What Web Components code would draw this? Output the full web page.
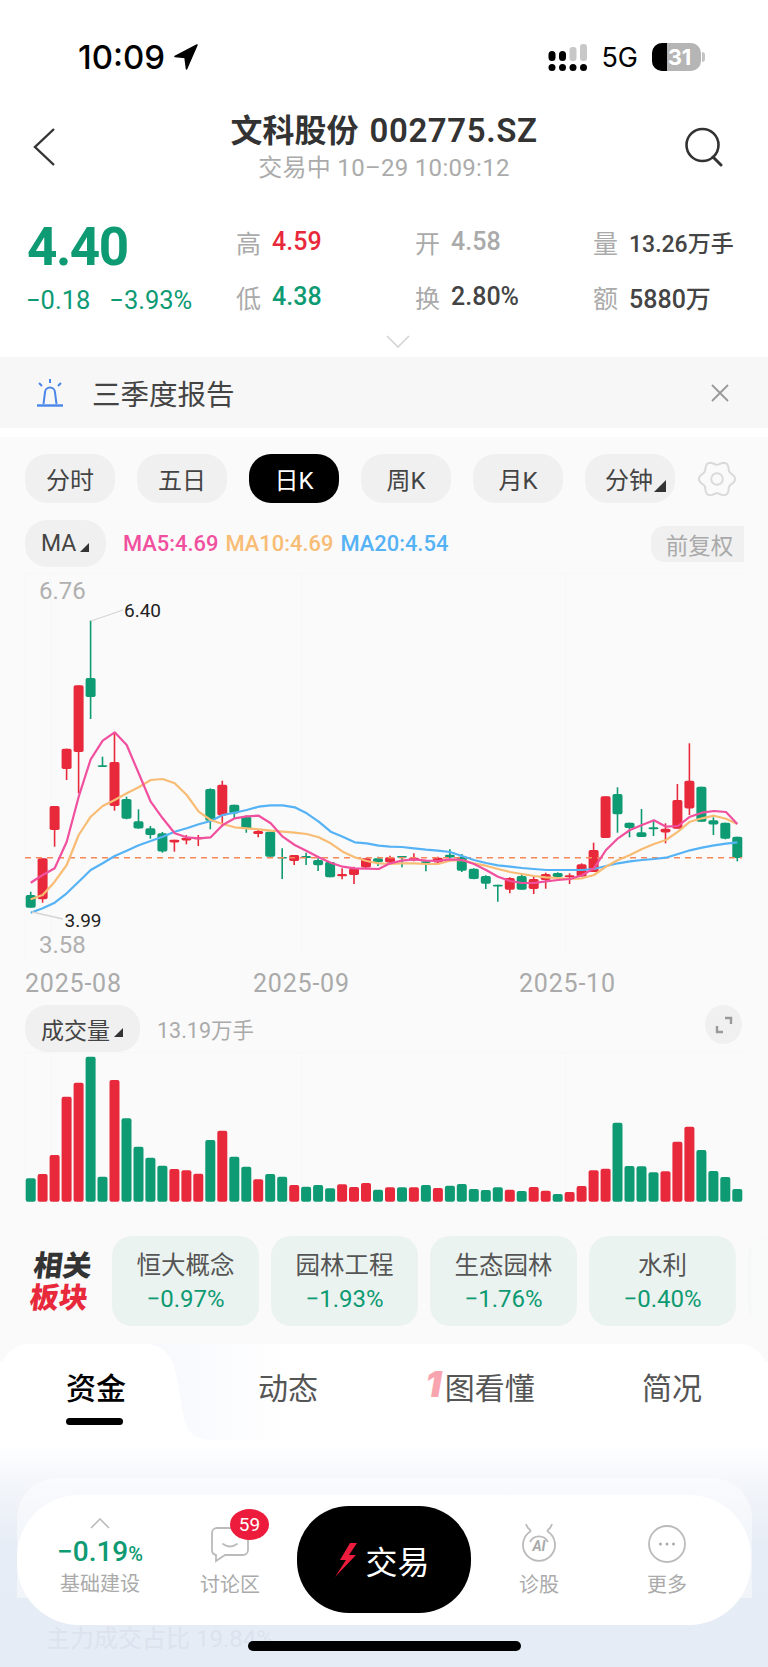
<!DOCTYPE html>
<html lang="zh-CN">
<head>
<meta charset="utf-8">
<title>文科股份</title>
<style>
  html, body { margin: 0; padding: 0; background: #fff; }
  body { width: 768px; height: 1667px; overflow: hidden; font-family: "Roboto", "Noto Sans CJK SC", sans-serif; }
</style>
</head>
<body>
<stock-page></stock-page>

<script>
const GREEN = '#0e9a72';
const RED = '#e8293b';

// [bodyTop, bodyBottom, wickTop, wickBottom, colour], measured from the crops
const LEFT_CANDLES = [
  [945,983,935,983,'g'],[835,958,835,968,'r'],[678,750,678,800,'r'],[506,567,506,600,'r'],[316,516,316,640,'r'],
  [294,351,122,417,'g'],[556,560,530,560,'g'],[546,678,458,692,'r'],[657,716,650,718,'g'],[724,746,688,746,'g'],
  [745,765,738,776,'g'],[760,815,756,818,'g'],[779,787,779,815,'r'],[773,781,765,793,'r'],[771,778,765,798,'r'],
  [627,722,625,748,'g'],[614,706,602,740,'r'],[674,700,674,716,'g'],[710,747,706,758,'g'],[753,762,750,772,'r'],
  [755,830,755,830,'g'],[831,835,805,897,'g'],[825,843,825,855,'r'],[828,834,818,855,'g'],[840,856,835,873,'g'],
  [846,892,846,892,'g'],[882,889,865,898,'r'],[865,885,860,912,'r'],[835,863,835,865,'r'],[835,847,830,858,'g']
].map(c => [580 + c[0] / 3, 580 + c[1] / 3, 580 + c[2] / 3, 580 + c[3] / 3, c[4]]);

const RIGHT_CANDLES = [
  [472,488,467,490,'r'],[468,473,468,502,'g'],[473,481,460,484,'r'],[484,488,484,514,'g'],[473,487,470,492,'r'],
  [464,472,448,475,'g'],[470,512,462,516,'g'],[506,537,505,538,'g'],[528,551,526,567,'g'],[554,559,554,605,'g'],
  [534,569,532,580,'r'],[528,569,520,569,'g'],[537,567,530,582,'r'],[522,540,518,566,'r'],[519,531,517,535,'g'],
  [526,532,520,552,'r'],[493,530,490,530,'r'],[450,516,428,516,'r'],[289,414,289,414,'r'],[282,343,262,398,'g'],
  [368,384,368,412,'g'],[397,411,327,411,'g'],[382,388,362,408,'g'],[386,397,370,430,'r'],[300,386,252,386,'r'],
  [242,325,130,345,'r'],[260,365,260,365,'g'],[361,374,352,405,'g'],[368,416,368,418,'g'],[410,474,410,484,'g']
].map(c => [700 + c[0] / 3, 700 + c[1] / 3, 700 + c[2] / 3, 700 + c[3] / 3, c[4]]);

const CANDLES = LEFT_CANDLES.concat(RIGHT_CANDLES);

const MA5 = [[92,908],[128,885],[164,865],[200,785],[236,650],[272,538],[308,482],[344,457],[380,495],[416,580],[452,665],[488,715],[524,760],[560,772],[596,775],[632,772],[668,735],[704,715],[740,709],[776,707],[812,730],[848,770],[884,795],[920,813],[956,832],[992,848],[1028,860],[1064,865],[1100,866],[1136,867]];
const MA5R = [[18,490],[54,482],[90,478],[126,482],[162,483],[198,478],[234,480],[270,492],[306,510],[342,530],[378,543],[414,549],[450,549],[486,544],[522,540],[558,537],[594,526],[630,505],[666,450],[702,415],[738,390],[774,375],[810,361],[846,380],[882,378],[918,350],[954,338],[990,333],[1026,336],[1060,372]];
const MA10 = [[92,958],[128,945],[164,905],[200,855],[236,765],[272,710],[308,678],[344,660],[380,640],[416,622],[452,600],[488,597],[524,610],[560,645],[596,695],[632,720],[668,732],[704,742],[740,745],[776,748],[812,752],[848,755],[884,758],[920,762],[956,772],[992,790],[1028,815],[1064,832],[1100,843],[1136,850]];
const MA10R = [[18,492],[54,490],[90,490],[126,492],[162,492],[198,482],[234,480],[270,490],[306,497],[342,507],[378,516],[414,522],[450,528],[486,532],[522,534],[558,537],[594,535],[630,525],[666,500],[702,480],[738,465],[774,447],[810,432],[846,420],[882,395],[918,365],[954,355],[990,347],[1026,356],[1060,372]];
const MA20 = [[92,998],[128,985],[164,968],[200,940],[236,905],[272,870],[308,850],[344,828],[380,812],[416,796],[452,783],[488,770],[524,755],[560,745],[596,733],[632,723],[668,705],[704,698],[740,690],[776,680],[812,676],[848,676],[884,682],[920,700],[956,725],[992,755],[1028,770],[1064,787],[1100,790],[1136,797]];
const MA20R = [[18,440],[54,441],[90,445],[126,449],[162,452],[198,456],[234,468],[270,480],[306,489],[342,496],[378,500],[414,504],[450,507],[486,510],[522,510],[558,510],[594,510],[630,507],[666,498],[702,490],[738,484],[774,480],[810,477],[846,473],[882,462],[918,451],[954,443],[990,436],[1026,431],[1060,427]];

const VOL_LEFT = [535,522,465,290,248,170,530,240,355,440,473,497,507,511,521,420,392,470,500,538,522,530,555,560,555,565,553,561,549,569];
const VOL_LEFT_C = 'grrrrggrggggrrrgrggrggrgggrrrg';
const VOL_RIGHT = [562,562,562,555,564,557,552,567,570,562,569,573,561,572,582,576,558,511,506,368,498,499,517,514,425,380,450,513,531,567];
const VOL_RIGHT_C = 'rgrgrggggg'+'rgrrgrrrrg'+'gggrrrgggg';

const candleX = i => 30.67 + 11.977 * i;

function maPoints(left, right) {
  const a = left.map(p => [p[0] / 3, 580 + p[1] / 3]);
  const b = right.map(p => [384 + p[0] / 3, 700 + p[1] / 3]);
  return a.concat(b).map(p => p[0].toFixed(1) + ',' + p[1].toFixed(1)).join(' ');
}

// soft six lobed cog outline
function gearPath() {
  let d = '';
  for (let a = 0; a < 360; a += 4) {
    const t = a * Math.PI / 180;
    const r = 16.2 + 1.9 * Math.cos(6 * t);
    d += (a ? 'L' : 'M') + (19 + r * Math.cos(t)).toFixed(2) + ' ' + (19 + r * Math.sin(t)).toFixed(2);
  }
  return d + 'Z';
}

class StatusBar extends HTMLElement {
  constructor() {
    super();
    this.attachShadow({ mode: 'open' });
    this.shadowRoot.innerHTML = `
      <style>
        :host { display: flex; align-items: center; height: 107px; padding: 7px 63px 0 78px; box-sizing: border-box; color: #000; }
        .time { font: 500 33px "Inter", "Liberation Sans", sans-serif; }
        .arrow { margin-left: 9px; }
        .gap { flex: 1; }
        .net { font: 400 27px "Inter", "Liberation Sans", sans-serif; margin: 0 14px 0 13px; }
        .batt { position: relative; width: 49px; height: 28px; border-radius: 10px; overflow: hidden; background: #b5b5b5; color: #fff; font: 700 22px/28px "Inter", "Liberation Sans", sans-serif; text-align: center; }
        .batt i { position: absolute; left: 0; top: 0; bottom: 0; width: 15px; background: #000; }
        .batt span { position: relative; left: 3px; }
        .tip { width: 3px; height: 10px; margin-left: 1px; background: #c4c4c4; border-radius: 0 3px 3px 0; }
      </style>
      <span class="time">10:09</span>
      <svg class="arrow" width="24" height="26" viewBox="0 0 24 26"><path d="M23 1 1 12.5 11 13.5 12.5 25z" fill="#000" stroke="#000" stroke-width="1.5" stroke-linejoin="round"/></svg>
      <span class="gap"></span>
      <svg width="40" height="27" viewBox="0 0 40 27">
        <g fill="#000">
          <rect x="0.5" y="7" width="7" height="10" rx="3.5"/><rect x="11" y="7" width="7" height="10" rx="3.5"/>
          <circle cx="4" cy="23.500" r="3.500"/><circle cx="14.500" cy="23.500" r="3.500"/>
          <circle cx="25" cy="23.500" r="3.500"/><circle cx="35.500" cy="23.500" r="3.500"/>
        </g>
        <rect x="21.500" y="3" width="7" height="14" rx="3" fill="#c8c8c8"/>
        <rect x="32" y="0" width="7" height="17" rx="3" fill="#c8c8c8"/>
      </svg>
      <span class="net">5G</span>
      <span class="batt"><i></i><span>31</span></span><span class="tip"></span>
    `;
  }
}

class TopBar extends HTMLElement {
  constructor() {
    super();
    this.attachShadow({ mode: 'open' });
    this.shadowRoot.innerHTML = `
      <style>
        :host { display: grid; grid-template-columns: 1fr auto 1fr; align-items: center; height: 80px; padding: 0 44px 0 44px; box-sizing: border-box; }
        .mid { display: flex; flex-direction: column; align-items: center; }
        .name { font: 600 32px/40px "Roboto", "Noto Sans CJK SC", sans-serif; color: #333; white-space: nowrap; word-spacing: 3px; }
        .name span { font-size: 33px; letter-spacing: .6px; }
        .sub { font: 400 24px/30px "Roboto", "Noto Sans CJK SC", sans-serif; color: #ababab; margin-top: 2px; letter-spacing: .3px; white-space: nowrap; }
        .b { margin-left: -12px; }
        .s { justify-self: end; }
      </style>
      <svg class="b" width="24" height="38" viewBox="0 0 24 38"><path d="M22 1 3 19 22 37" fill="none" stroke="#333" stroke-width="2.4"/></svg>
      <div class="mid"><div class="name">文科股份 <span>002775.SZ</span></div><div class="sub">交易中 10–29 10:09:12</div></div>
      <svg class="s" width="40" height="40" viewBox="0 0 40 40"><circle cx="18.5" cy="18" r="16" fill="none" stroke="#333" stroke-width="2.6"/><path d="M29 30 37 38" stroke="#333" stroke-width="3" stroke-linecap="round"/></svg>
    `;
  }
}

class QuoteStat extends HTMLElement {
  constructor() {
    super();
    this.attachShadow({ mode: 'open' });
    this.shadowRoot.innerHTML = `
      <style>
        :host { display: flex; align-items: center; gap: 11px; height: 55px; white-space: nowrap; }
        .k { font-size: 25px; color: #aaa; }
        .v { font-size: 25px; font-weight: 500; color: var(--val, #444); }
        :host([small]) .v { font-size: 23px; }
      </style>
      <span class="k">${this.getAttribute('label')}</span>
      <span class="v"><slot></slot></span>
    `;
  }
}

class QuotePanel extends HTMLElement {
  constructor() {
    super();
    this.attachShadow({ mode: 'open' });
    this.shadowRoot.innerHTML = `
      <style>
        :host { display: block; height: 170px; box-sizing: border-box; padding: 27px 0 0 27px; position: relative; }
        .wrap { display: grid; grid-template-columns: 209px 179px 178px auto; }
        .price { font: 700 53px/52px "Roboto", sans-serif; color: ${GREEN}; height: 55px; box-sizing: border-box; padding-top: 7px; letter-spacing: -1.5px; }
        .chg { font-size: 25.500px; color: ${GREEN}; display: flex; gap: 19px; height: 55px; box-sizing: border-box; padding-top: 7px; align-items: center; margin-left: -1px; white-space: nowrap; }
        .down { position: absolute; left: 386px; top: 148px; }
        quote-stat.red { --val: ${RED}; }
        quote-stat.green { --val: ${GREEN}; }
        quote-stat.mute { --val: #aaa; }
      </style>
      <div class="wrap">
        <div class="price">4.40</div>
        <quote-stat label="高" class="red">4.59</quote-stat>
        <quote-stat label="开" class="mute">4.58</quote-stat>
        <quote-stat label="量" small>13.26万手</quote-stat>
        <div class="chg"><span>−0.18</span><span>−3.93%</span></div>
        <quote-stat label="低" class="green">4.38</quote-stat>
        <quote-stat label="换">2.80%</quote-stat>
        <quote-stat label="额">5880万</quote-stat>
      </div>
      <svg class="down" width="24" height="13" viewBox="0 0 24 13"><path d="M1 1 12 12 23 1" fill="none" stroke="#d4d4d4" stroke-width="1.6"/></svg>
    `;
  }
}

class NoticeBar extends HTMLElement {
  constructor() {
    super();
    this.attachShadow({ mode: 'open' });
    this.shadowRoot.innerHTML = `
      <style>
        :host { display: flex; align-items: center; height: 71px; background: #f7f7f7; padding: 0 39px 0 36px; font-size: 28.500px; color: #444; }
        .txt { flex: 1; margin-left: 28px; }
      </style>
      <svg width="28" height="28" viewBox="0 0 28 28" fill="none" stroke="#4a86e8" stroke-width="2">
        <path d="M7.500 25 9 13.500a5 5 0 0 1 10 0L20.500 25"/><path d="M1 26.500h26" stroke-width="2.400"/><path d="M14 0v4M3 4l3 3M25 4l-3 3"/>
      </svg>
      <span class="txt"><slot></slot></span>
      <svg width="18" height="18" viewBox="0 0 18 18"><path d="M1 1 17 17M17 1 1 17" stroke="#999" stroke-width="1.800"/></svg>
    `;
  }
}

class ChipButton extends HTMLElement {
  constructor() {
    super();
    this.attachShadow({ mode: 'open' });
    this.shadowRoot.innerHTML = `
      <style>
        :host { display: flex; align-items: center; justify-content: center; width: 90px; height: 49px; box-sizing: border-box; border-radius: 22px; background: #f0f0f0; color: #444; font-size: 24px; white-space: nowrap; }
        :host([active]) { background: #000; color: #fff; }
        :host([caret]) { justify-content: flex-start; padding-left: var(--chip-pad, 16px); }
        .corner { display: none; align-self: flex-end; margin: 0 0 var(--caret-bottom, 15px) var(--caret-gap, 4px); width: 0; height: 0; border-left: var(--caret-size, 10px) solid transparent; border-bottom: var(--caret-size, 10px) solid #333; }
        :host([caret]) .corner { display: block; }
      </style>
      <slot></slot><i class="corner"></i>
    `;
  }
}

class PeriodRow extends HTMLElement {
  constructor() {
    super();
    this.attachShadow({ mode: 'open' });
    this.shadowRoot.innerHTML = `
      <style>
        :host { display: flex; align-items: center; gap: 22px; height: 49px; padding-left: 25px; --chip-pad: 20px; --caret-bottom: 11px; --caret-gap: 1px; --caret-size: 12px; }
        svg { margin-left: 1px; }
      </style>
      <slot></slot>
      <svg width="38" height="38" viewBox="0 0 38 38" fill="none" stroke="#dadada" stroke-width="2">
        <path d="${gearPath()}" stroke-linejoin="round"/>
        <circle cx="19" cy="19" r="5.800"/>
      </svg>
    `;
  }
}

class MaLegend extends HTMLElement {
  constructor() {
    super();
    this.attachShadow({ mode: 'open' });
    this.shadowRoot.innerHTML = `
      <style>
        :host { display: flex; align-items: center; height: 47px; margin-top: 17px; padding-left: 25px; font-size: 21.900px; white-space: nowrap; }
        chip-button { width: 81px; height: 47px; font-size: 23px; --caret-size: 9px; }
        .vals { display: flex; gap: 7px; margin-left: 17px; flex: 1; font-weight: 500; }
        .fq { display: flex; align-items: center; justify-content: center; width: 93px; height: 36px; box-sizing: border-box; padding-left: 4px; margin-right: 24px; background: #f0f0f0; border-radius: 14px 0 0 14px; color: #aaa; font-size: 22.500px; }
      </style>
      <chip-button caret>MA</chip-button>
      <div class="vals">
        <span style="color:#f0509e">MA5:4.69</span>
        <span style="color:#f8bc75">MA10:4.69</span>
        <span style="color:#55b2f5">MA20:4.54</span>
      </div>
      <div class="fq">前复权</div>
    `;
  }
}

class KlineChart extends HTMLElement {
  constructor() {
    super();
    this.attachShadow({ mode: 'open' });
    const body = CANDLES.map((c, i) => {
      const x = candleX(i), col = c[4] === 'r' ? RED : GREEN;
      const h = Math.max(c[1] - c[0], 1.6);
      return `<path d="M${x.toFixed(1)} ${c[2].toFixed(1)}V${c[3].toFixed(1)}" stroke="${col}" stroke-width="1.600"/>` +
        `<rect x="${(x - 5).toFixed(1)}" y="${c[0].toFixed(1)}" width="10" height="${h.toFixed(1)}" rx="1.800" fill="${col}"/>`;
    }).join('');
    this.shadowRoot.innerHTML = `
      <style>
        :host { display: block; height: 384px; margin-top: 6px; }
        svg { display: block; overflow: visible; }
        text { font-family: "Roboto", sans-serif; }
      </style>
      <svg width="768" height="392" viewBox="0 573 768 392">
        <path d="M25 573.500H744M25 957V573M51 573V957M302 573V957M566 573V957" stroke="#f7f7f7" fill="none"/>
        <text x="39" y="599" font-size="24" fill="#b0b0b0">6.76</text>
        <text x="39" y="953" font-size="24" fill="#b0b0b0">3.58</text>
        ${body}
        <path d="M25 857.700H742" stroke="#f5875a" stroke-width="1.600" stroke-dasharray="6 5"/>
        <polyline points="${maPoints(MA20, MA20R)}" fill="none" stroke="#55b2f5" stroke-width="2.200" stroke-linejoin="round"/>
        <polyline points="${maPoints(MA10, MA10R)}" fill="none" stroke="#f8bc75" stroke-width="2.200" stroke-linejoin="round"/>
        <polyline points="${maPoints(MA5, MA5R)}" fill="none" stroke="#f0509e" stroke-width="2.200" stroke-linejoin="round"/>
        <path d="M91 621 123 610M32 912 63 919" stroke="#d5d5d5" stroke-width="1.300"/>
        <text x="124" y="617" font-size="19" fill="#222">6.40</text>
        <text x="64.500" y="926.500" font-size="19" fill="#222">3.99</text>
      </svg>
    `;
  }
}

class DateAxis extends HTMLElement {
  constructor() {
    super();
    this.attachShadow({ mode: 'open' });
    this.shadowRoot.innerHTML = `
      <style>
        :host { display: grid; grid-template-columns: 228px 266px auto; height: 48px; box-sizing: border-box; padding: 5px 0 0 25px; align-items: center; font-size: 25px; letter-spacing: .8px; color: #aaa; }
      </style>
      <span>2025-08</span><span>2025-09</span><span>2025-10</span>
    `;
  }
}

class VolumeChart extends HTMLElement {
  constructor() {
    super();
    this.attachShadow({ mode: 'open' });
    const bar = (top, col, x) => {
      const y = 1000 + top / 3;
      return `<rect x="${(x - 5).toFixed(1)}" y="${y.toFixed(1)}" width="10" height="${(1201.7 - y).toFixed(1)}" rx="2" fill="${col === 'r' ? RED : GREEN}"/>`;
    };
    const bars = VOL_LEFT.map((t, i) => bar(t, VOL_LEFT_C[i], candleX(i))).join('') +
      VOL_RIGHT.map((t, i) => bar(t, VOL_RIGHT_C[i], candleX(i + 30))).join('');
    this.shadowRoot.innerHTML = `
      <style>
        :host { display: block; }
        .head { display: flex; align-items: center; height: 47px; padding: 0 26px 0 25px; }
        chip-button { width: 115px; height: 47px; font-size: 23px; --caret-size: 9px; }
        .sum { flex: 1; margin-left: 17px; font-size: 21.500px; color: #aaa; }
        .exp { width: 37px; height: 39px; border-radius: 50%; background: #f0f0f0; display: flex; align-items: center; justify-content: center; margin-top: -8px; }
        svg.v { display: block; }
      </style>
      <div class="head">
        <chip-button caret>成交量</chip-button>
        <span class="sum">13.19万手</span>
        <span class="exp"><svg width="18" height="18" viewBox="0 0 18 18" fill="none" stroke="#999" stroke-width="2.400"><path d="M10 2h6v6M8 16H2v-6"/></svg></span>
      </div>
      <svg class="v" width="768" height="155" viewBox="0 1052 768 155">
        <path d="M25 1052.500H744M25 1052V1202M51 1052V1202M302 1052V1202M566 1052V1202" stroke="#f7f7f7" fill="none"/>
        ${bars}
      </svg>
    `;
  }
}

class SectorCard extends HTMLElement {
  constructor() {
    super();
    this.attachShadow({ mode: 'open' });
    this.shadowRoot.innerHTML = `
      <style>
        :host { display: flex; flex-direction: column; align-items: center; flex: none; width: 147px; height: 90px; padding-top: 10px; box-sizing: border-box; border-radius: 20px; background: #ebf3f0; font-size: 24.500px; color: #555; }
        .p { color: ${GREEN}; margin-top: 4px; font-size: 24px; }
      </style>
      <div><slot></slot></div>
      <div class="p">${this.getAttribute('pct') || ''}</div>
    `;
  }
}

class SectorRow extends HTMLElement {
  constructor() {
    super();
    this.attachShadow({ mode: 'open' });
    this.shadowRoot.innerHTML = `
      <style>
        :host { display: flex; align-items: center; height: 90px; margin-top: 29px; padding-left: 32px; overflow: hidden; position: relative; }
        .tag { width: 80px; font-size: 29px; line-height: 32px; padding-top: 2px; font-weight: 900; color: #333; flex: none; transform: skewX(-7deg); transform-origin: 0 50%; }
        .tag b { display: block; color: ${RED}; font-weight: 900; }
        .list { display: flex; gap: 12px; }
        .fade { position: absolute; right: 0; top: 0; bottom: 0; width: 36px; background: linear-gradient(to right, rgba(250,250,250,0), rgba(250,250,250,.9) 60%); }
      </style>
      <div class="tag">相关<b>板块</b></div>
      <div class="list">
        <sector-card pct="−0.97%">恒大概念</sector-card>
        <sector-card pct="−1.93%">园林工程</sector-card>
        <sector-card pct="−1.76%">生态园林</sector-card>
        <sector-card pct="−0.40%">水利</sector-card>
        <sector-card></sector-card>
      </div>
      <div class="fade"></div>
    `;
  }
}

class TabPanel extends HTMLElement {
  constructor() {
    super();
    this.attachShadow({ mode: 'open' });
    this.shadowRoot.innerHTML = `
      <style>
        :host { display: block; position: relative; height: 323px; border-radius: 30px 30px 0 0; overflow: hidden;
          background: linear-gradient(to bottom, #fff 0, #fff 100px, #f3f6fa 140px, #e7edf6 200px, #e6ecf5 100%); }
        .tabs { position: relative; display: grid; grid-template-columns: repeat(4, 192px); height: 96px; background: linear-gradient(to right, #f8f9fd 22%, #fff 38%); font-size: 30px; color: #555; }
        .lip { position: absolute; left: 0; top: 0; }
        .tab { position: relative; display: flex; align-items: flex-start; justify-content: center; padding-top: 20px; }
        .on { color: #000; font-weight: 500; }
        .on::after { content: ""; position: absolute; left: 66px; top: 74px; width: 57px; height: 7px; border-radius: 4px; background: #000; }
        .one { color: #f9a5b0; font: italic 900 36px/40px "Inter", sans-serif; margin-right: 3px; }
        .faint { position: absolute; left: 46px; top: 275px; font-size: 24px; color: #dce3ee; }
        .band { position: absolute; left: 17px; right: 16px; top: 134px; height: 120px; background: rgba(255,255,255,.45); border-radius: 40px 40px 0 0; }
      </style>
      <div class="tabs">
        <svg class="lip" width="210" height="96" viewBox="0 0 210 96"><path d="M0 96V30Q0 0 30 0H145Q170 0 176 30L184 74Q188 96 210 96Z" fill="#fff"/></svg>
        <div class="tab on">资金</div>
        <div class="tab">动态</div>
        <div class="tab"><span class="one">1</span>图看懂</div>
        <div class="tab">简况</div>
      </div>
      <div class="band"></div>
      <div class="faint">主力成交占比 19.84%</div>
    `;
  }
}

class NavItem extends HTMLElement {
  constructor() {
    super();
    this.attachShadow({ mode: 'open' });
    this.shadowRoot.innerHTML = `
      <style>
        :host { display: flex; flex-direction: column; align-items: center; position: relative; width: 84px; height: 84px; justify-content: flex-end; color: #aaa; font-size: 20px; }
        .ico { height: 44px; display: flex; align-items: flex-end; justify-content: center; margin-bottom: 8px; }
        .lab { line-height: 28px; white-space: nowrap; }
      </style>
      <div class="ico"><slot name="icon"></slot></div>
      <div class="lab">${this.getAttribute('label')}</div>
    `;
  }
}

class BottomNav extends HTMLElement {
  constructor() {
    super();
    this.attachShadow({ mode: 'open' });
    this.shadowRoot.innerHTML = `
      <style>
        :host { display: flex; align-items: center; position: absolute; left: 17px; top: 1495px; width: 734px; height: 130px; background: #fff; border-radius: 62px; box-sizing: border-box; }
        .w1 { position: absolute; left: 41px; top: 23px; display: flex; flex-direction: column; align-items: center; width: 84px; }
        .chg { color: ${GREEN}; font: 500 28px/32px "Roboto", sans-serif; white-space: nowrap; margin-top: 7px; }
        .chg small { font-size: 20px; }
        .w1 .lab { color: #aaa; font-size: 20px; line-height: 28px; margin-top: 0; white-space: nowrap; }
        .slot2 { position: absolute; left: 171px; top: 20px; }
        .slot3 { position: absolute; left: 280px; top: 11px; width: 174px; height: 107px; border-radius: 52px; background: #000; color: #fff; display: flex; align-items: center; justify-content: center; gap: 8px; font-size: 32px; }
        .slot3 svg { margin-left: -3px; }
        .slot4 { position: absolute; left: 480px; top: 20px; }
        .slot5 { position: absolute; left: 608px; top: 20px; }
        .badge { position: absolute; left: 42px; top: -6px; width: 39px; height: 31px; border-radius: 50%; background: #ee1c3c; color: #fff; font-size: 19px; line-height: 31px; text-align: center; }
      </style>
      <div class="w1">
        <svg width="20" height="11" viewBox="0 0 20 11"><path d="M1 10 10 1 19 10" fill="none" stroke="#bbb" stroke-width="1.600"/></svg>
        <div class="chg">−0.19<small>%</small></div>
        <div class="lab">基础建设</div>
      </div>
      <nav-item class="slot2" label="讨论区">
        <svg slot="icon" width="38" height="36" viewBox="0 0 38 36" fill="none" stroke="#bbb" stroke-width="1.800"><path d="M6 1h26a5 5 0 0 1 5 5v17a5 5 0 0 1-5 5H14l-9 6v-6a5 5 0 0 1-4-5V6a5 5 0 0 1 5-5z"/><path d="M12 17q7 5 14 0" stroke-linecap="round"/></svg>
        <span slot="icon" class="badge">59</span>
      </nav-item>
      <div class="slot3">
        <svg width="22" height="34" viewBox="0 0 22 34"><path d="M15 0 5 17h6L0 34 21 12h-7L22 0z" fill="#ee1c3c"/></svg>
        <span>交易</span>
      </div>
      <nav-item class="slot4" label="诊股">
        <svg slot="icon" width="36" height="40" viewBox="0 0 36 40" fill="none" stroke="#bbb" stroke-width="1.800"><path d="M5 1q1 4 5 7M31 1q-1 4-5 7"/><path d="M10 8A16 16 0 1 0 26 8"/><path d="M9 19A10 10 0 0 1 27 19"/><text x="18" y="28" font-family="Roboto,sans-serif" font-size="14" font-weight="700" font-style="italic" fill="#aaa" stroke="none" text-anchor="middle">AI</text></svg>
      </nav-item>
      <nav-item class="slot5" label="更多">
        <svg slot="icon" width="38" height="38" viewBox="0 0 38 38" fill="none" stroke="#bbb" stroke-width="1.800"><circle cx="19" cy="19" r="18"/><g fill="#aaa" stroke="none"><circle cx="12.500" cy="19" r="1.500"/><circle cx="19" cy="19" r="1.500"/><circle cx="25.500" cy="19" r="1.500"/></g></svg>
      </nav-item>
    `;
  }
}

class StockPage extends HTMLElement {
  constructor() {
    super();
    this.attachShadow({ mode: 'open' });
    this.shadowRoot.innerHTML = `
      <style>
        :host { display: block; position: relative; width: 768px; height: 1667px; overflow: hidden; font-family: "Roboto", "Noto Sans CJK SC", sans-serif; background: #fff; }
        .chart { background: #fafafa; margin-top: 9px; padding-top: 17px; height: 925px; margin-bottom: -18px; box-sizing: border-box; }
        tab-panel { position: relative; }
        .home { position: absolute; left: 248px; top: 1641px; width: 273px; height: 10px; border-radius: 5px; background: #000; }
      </style>
      <status-bar></status-bar>
      <top-bar></top-bar>
      <quote-panel></quote-panel>
      <notice-bar>三季度报告</notice-bar>
      <div class="chart">
        <period-row>
          <chip-button>分时</chip-button>
          <chip-button>五日</chip-button>
          <chip-button active>日K</chip-button>
          <chip-button>周K</chip-button>
          <chip-button>月K</chip-button>
          <chip-button caret>分钟</chip-button>
        </period-row>
        <ma-legend></ma-legend>
        <kline-chart></kline-chart>
        <date-axis></date-axis>
        <volume-chart></volume-chart>
        <sector-row></sector-row>
      </div>
      <tab-panel></tab-panel>
      <bottom-nav></bottom-nav>
      <div class="home"></div>
    `;
  }
}

customElements.define('status-bar', StatusBar);
customElements.define('top-bar', TopBar);
customElements.define('quote-stat', QuoteStat);
customElements.define('quote-panel', QuotePanel);
customElements.define('notice-bar', NoticeBar);
customElements.define('chip-button', ChipButton);
customElements.define('period-row', PeriodRow);
customElements.define('ma-legend', MaLegend);
customElements.define('kline-chart', KlineChart);
customElements.define('date-axis', DateAxis);
customElements.define('volume-chart', VolumeChart);
customElements.define('sector-card', SectorCard);
customElements.define('sector-row', SectorRow);
customElements.define('tab-panel', TabPanel);
customElements.define('nav-item', NavItem);
customElements.define('bottom-nav', BottomNav);
customElements.define('stock-page', StockPage);
</script>
</body>
</html>
